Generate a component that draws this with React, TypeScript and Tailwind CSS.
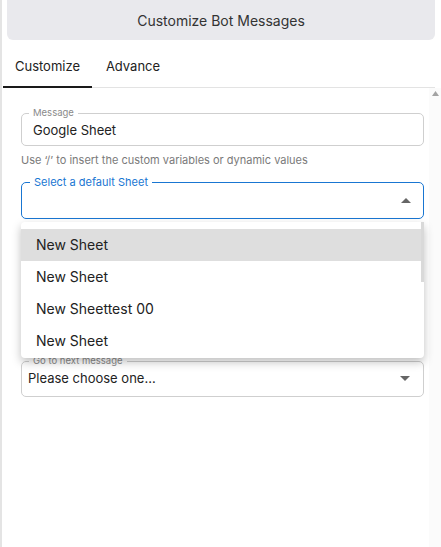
import { ReactNode } from "react";

const font = { fontFamily: "Inter, 'Noto Sans', sans-serif" };

function Outlined({
  label,
  focused,
  className,
  children,
}: {
  label: string;
  focused?: boolean;
  className?: string;
  children: ReactNode;
}) {
  return (
    <div
      className={`relative w-[403px] rounded-[5px] ${
        focused ? "border-[1.5px] border-[#1976d2]" : "border border-[#cfcfcf]"
      } ${className ?? ""}`}
    >
      <span
        className={`absolute -top-[8px] bg-white leading-[14px] ${
          focused
            ? "left-[8px] px-[4px] text-[11px] text-[#1976d2]"
            : "left-[7px] px-[4px] text-[9.5px] text-[#8a8a8a]"
        }`}
      >
        {label}
      </span>
      {children}
    </div>
  );
}

function Caret({ up }: { up?: boolean }) {
  return (
    <svg width="10" height="5" viewBox="0 0 10 5" className="shrink-0">
      {up ? <path d="M0 5 L5 0 L10 5 Z" fill="#666" /> : <path d="M0 0 L5 5 L10 0 Z" fill="#666" />}
    </svg>
  );
}

export default function App() {
  const sheets = ["New Sheet", "New Sheet", "New Sheettest 00", "New Sheet"];

  return (
    <div className="w-[441px] h-[547px] bg-white flex flex-col border-l-2 border-[#e4e4e4] overflow-hidden" style={font}>
      {/* Header */}
      <div className="ml-[5px] mr-[6px] h-[40px] shrink-0 rounded-b-[6px] bg-[#e9e9ed] flex items-center justify-center text-[14px] text-[#333]">
        Customize Bot Messages
      </div>

      {/* Tabs */}
      <div className="ml-[1px] mr-[6px] h-[48px] shrink-0 flex border-b border-[#e3e3e3] text-[13px] text-[#222]">
        <div className="w-[89px] flex items-center justify-center pt-[7px] border-b-2 border-[#1a1a1a] -mb-px">Customize</div>
        <div className="w-[82px] flex items-center justify-center pt-[7px]">Advance</div>
      </div>

      {/* Body */}
      <div className="flex flex-1">
        <div className="flex-1 pl-[19px] pr-[5px] pt-[25px] flex flex-col">
          <Outlined label="Message" className="h-[33px] flex items-center pl-[11px] pt-[2px]">
            <span className="text-[13px] text-[#222]">Google Sheet</span>
          </Outlined>
          <p className="mt-[6px] text-[11px] text-[#7a7a7a]">Use ‘/’ to insert the custom variables or dynamic values</p>

          <div className="relative mt-[13px]">
            <Outlined label="Select a default Sheet" focused className="h-[37px] flex items-center justify-end pr-[12px]">
              <Caret up />
            </Outlined>

            {/* Dropdown menu */}
            <div className="absolute left-0 top-[40px] z-10 w-[403px] bg-white rounded-[4px] pt-[7px] pb-[1px] shadow-[0_4px_10px_rgba(0,0,0,0.25)]">
              {sheets.map((s, i) => (
                <div
                  key={i}
                  className={`h-[32px] flex items-center pl-[15px] text-[14px] text-[#222] ${i === 0 ? "bg-[#dedede]" : ""}`}
                >
                  {s}
                </div>
              ))}
              <div className="absolute right-0 top-0 w-[3px] h-[60px] bg-[#d9d9d9]" />
            </div>

            <div className="h-[142px]" />
          </div>

          <Outlined label="Go to next message" className="h-[36px] flex items-center justify-between pl-[6px] pr-[13px]">
            <span className="text-[13px] text-[#222]">Please choose one...</span>
            <Caret />
          </Outlined>
        </div>

        {/* Page scrollbar */}
        <div className="w-[12px] bg-[#fbfbfb] flex justify-center pt-[3px]">
          <svg width="7" height="5" viewBox="0 0 7 5">
            <path d="M0 5 L3.5 0 L7 5 Z" fill="#a3a3a3" />
          </svg>
        </div>
      </div>
    </div>
  );
}
